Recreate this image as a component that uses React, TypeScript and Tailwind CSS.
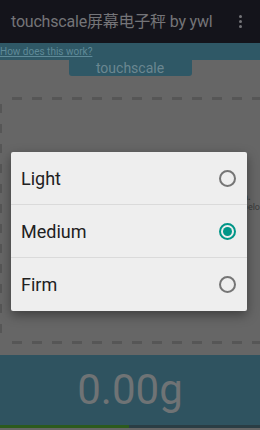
import React from "react";

const options = ["Light", "Medium", "Firm"];

const Radio = ({ checked }: { checked: boolean }) =>
  checked ? (
    <div className="w-[17px] h-[17px] rounded-full border-2 border-[#009688] flex items-center justify-center">
      <div className="w-[9px] h-[9px] rounded-full bg-[#009688]" />
    </div>
  ) : (
    <div className="w-[17px] h-[17px] rounded-full border-2 border-[#757575]" />
  );

const HDashes = () => (
  <div className="flex shrink-0 gap-[10px] pl-[12px] h-[3px] overflow-hidden">
    {Array.from({ length: 13 }).map((_, i) => (
      <div key={i} className="w-[10px] h-[3px] shrink-0 bg-[#565656]" />
    ))}
  </div>
);

const VDashes = () => (
  <div className="flex flex-col gap-[11px] pt-[4px] w-[2px] overflow-hidden">
    {Array.from({ length: 13 }).map((_, i) => (
      <div key={i} className="w-[2px] h-[9px] shrink-0 bg-[#565656]" />
    ))}
  </div>
);

export default function App() {
  const selected = "Medium";

  return (
    <div
      className="relative w-[260px] h-[430px] overflow-hidden bg-[#666666]"
      style={{ fontFamily: "Roboto, 'Noto Sans CJK SC', sans-serif" }}
    >
      {/* app bar */}
      <div className="h-[43px] bg-[#14141b] flex items-center pl-[11px] pr-[18px]">
        <span className="flex-1 text-[16px] text-[#747478] tracking-[-0.2px]">
          touchscale屏幕电子秤 by ywl
        </span>
        <div className="flex flex-col gap-[2px]">
          <div className="w-[3px] h-[3px] rounded-full bg-[#747478]" />
          <div className="w-[3px] h-[3px] rounded-full bg-[#747478]" />
          <div className="w-[3px] h-[3px] rounded-full bg-[#747478]" />
        </div>
      </div>

      {/* link strip */}
      <div className="h-[17px] bg-[#2f5866] flex items-center">
        <span className="text-[10px] text-[#5f8a98] underline leading-none">
          How does this work?
        </span>
      </div>

      {/* tab */}
      <div className="flex justify-center">
        <div className="w-[123px] h-[17px] bg-[#2f5866] rounded-b-[3px] flex items-center justify-center -mt-px">
          <span className="text-[14px] text-[#6b8791] leading-none">touchscale</span>
        </div>
      </div>

      {/* scale area */}
      <div className="h-[280px] pt-[21px] pb-[12px] flex flex-col">
        <HDashes />
        <div className="flex-1 min-h-0 overflow-hidden flex relative">
          <VDashes />
          <div className="absolute right-0 top-[92px] text-[9px] leading-[10px] text-[#3a3a3a] font-bold">
            n.
            <br />
            <span className="font-normal">belo</span>
          </div>
        </div>
        <HDashes />
      </div>

      {/* readout */}
      <div className="h-[70px] bg-[#2f5360] flex items-center justify-center -mt-[1px]">
        <span className="text-[42px] text-[#6f7375] leading-none">0.00g</span>
      </div>
      <div className="h-[3px] flex">
        <div className="w-[129px] bg-[#2c5a1d]" />
        <div className="flex-1 bg-[#2a3d44]" />
      </div>

      {/* dialog */}
      <div className="absolute left-[11px] top-[152px] w-[236px] bg-[#eeeeee] rounded-[2px] shadow-[0_4px_12px_rgba(0,0,0,0.4)]">
        {options.map((o, i) => (
          <div
            key={o}
            className={`h-[53px] flex items-center justify-between pl-[10px] pr-[11px] ${i < options.length - 1 ? "border-b border-[#dadada]" : ""}`}
          >
            <span className="text-[18px] text-[#212121]">{o}</span>
            <Radio checked={o === selected} />
          </div>
        ))}
      </div>
    </div>
  );
}
